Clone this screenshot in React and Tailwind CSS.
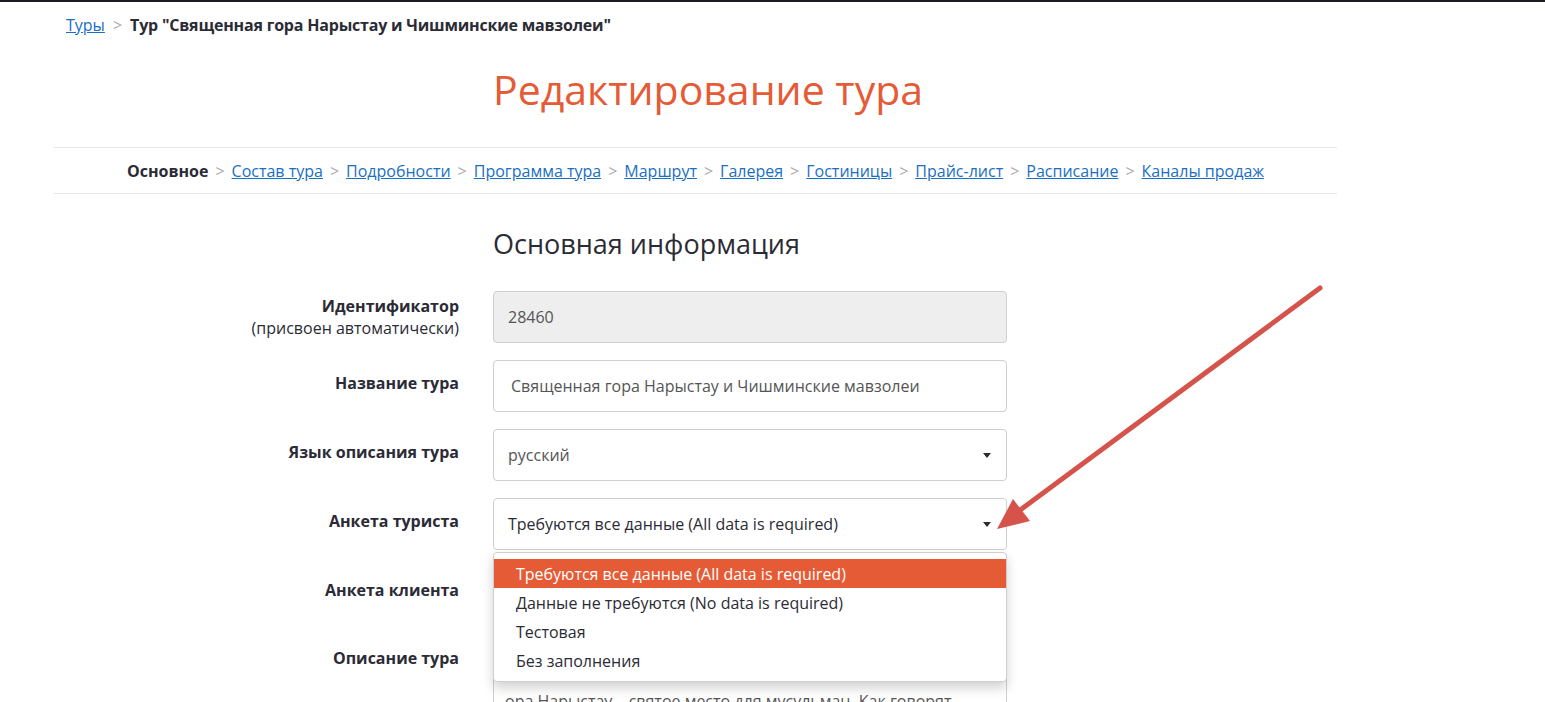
import React from 'react';

const navSteps = [
  'Состав тура',
  'Подробности',
  'Программа тура',
  'Маршрут',
  'Галерея',
  'Гостиницы',
  'Прайс-лист',
  'Расписание',
  'Каналы продаж',
];

const touristOptions = [
  'Требуются все данные (All data is required)',
  'Данные не требуются (No data is required)',
  'Тестовая',
  'Без заполнения',
];

function Caret() {
  return (
    <svg width="8" height="5" viewBox="0 0 8 5" className="shrink-0">
      <path d="M0 0h8L4 5z" fill="#2b2b36" />
    </svg>
  );
}

function Row({ label, sub, children }) {
  return (
    <div className="flex items-center">
      <div className={sub ? 'w-[405px] text-right leading-[22px]' : 'w-[405px] text-right leading-[22px] mb-[6px]'}>
        <div className="font-bold text-[#2b2b36]">{label}</div>
        {sub && <div className="text-[#2b2b36]">{sub}</div>}
      </div>
      <div className="ml-[34px] w-[514px]">{children}</div>
    </div>
  );
}

export default function App() {
  return (
    <div
      className="relative h-[702px] overflow-hidden bg-white border-t-2 border-[#1c1c24] text-[16px] text-[#2b2b36]"
      style={{ fontFamily: '"Open Sans", "Noto Sans", sans-serif' }}
    >
      <div className="ml-[54px] w-[1283px]">
        {/* top breadcrumbs */}
        <div className="pl-3 pt-[11px] h-[48px] flex items-start gap-2">
          <a href="#" className="text-[#1a6fc4] underline">Туры</a>
          <span className="text-[#aaa]">&gt;</span>
          <span className="font-bold tracking-[-0.2px]">Тур "Священная гора Нарыстау и Чишминские мавзолеи"</span>
        </div>

        <h1 className="ml-[439px] mt-[9px] text-[41px] leading-[60px] text-[#e55b35] font-normal">
          Редактирование тура
        </h1>

        <div className="mt-[28px] border-y border-[#e6e6e6] h-[47px] flex items-center justify-center gap-[7px]">
          <span className="font-bold">Основное</span>
          {navSteps.map((s) => (
            <React.Fragment key={s}>
              <span className="text-[#aaa]">&gt;</span>
              <a href="#" className="text-[#1a6fc4] underline">{s}</a>
            </React.Fragment>
          ))}
        </div>

        <h2 className="ml-[439px] mt-[32px] text-[27px] leading-[36px] font-normal text-[#2b2b36]">
          Основная информация
        </h2>

        <div className="mt-[29px] flex flex-col gap-[17px]">
          <Row label="Идентификатор" sub="(присвоен автоматически)">
            <div className="h-[52px] rounded border border-[#cfcfcf] bg-[#eeeeee] px-[14px] flex items-center text-[#555]">
              28460
            </div>
          </Row>
          <Row label="Название тура">
            <div className="h-[52px] rounded border border-[#cfcfcf] bg-white px-[17px] flex items-center text-[#555]">
              Священная гора Нарыстау и Чишминские мавзолеи
            </div>
          </Row>
          <Row label="Язык описания тура">
            <div className="h-[52px] rounded border border-[#cfcfcf] bg-white pl-[14px] pr-[15px] flex items-center justify-between text-[#555]">
              <span>русский</span>
              <Caret />
            </div>
          </Row>
          <Row label="Анкета туриста">
            <div className="relative">
              <div className="h-[52px] rounded border border-[#cfcfcf] bg-white pl-[14px] pr-[15px] flex items-center justify-between text-[#2b2b36]">
                <span>Требуются все данные (All data is required)</span>
                <Caret />
              </div>
              <ul className="absolute z-10 left-0 right-0 top-[54px] rounded border border-[#cfcfcf] bg-white py-[6px] shadow-[0_6px_12px_rgba(0,0,0,0.18)]">
                {touristOptions.map((o, i) => (
                  <li
                    key={o}
                    className={
                      i === 0
                        ? 'h-[29px] pl-[22px] flex items-center bg-[#e55b35] text-white'
                        : 'h-[29px] pl-[22px] flex items-center text-[#2b2b36]'
                    }
                  >
                    {o}
                  </li>
                ))}
              </ul>
            </div>
          </Row>
          <Row label="Анкета клиента">
            <div className="h-[52px] rounded border border-[#cfcfcf] bg-white pl-[14px] pr-[15px] flex items-center justify-between text-[#555]">
              <span>Требуются все данные (All data is required)</span>
              <Caret />
            </div>
          </Row>
          <div className="flex items-start">
            <div className="w-[405px] text-right font-bold pt-[11px] leading-[22px]">Описание тура</div>
            <div className="ml-[34px] w-[514px] h-[140px] rounded border border-[#cfcfcf] bg-white px-[11px] pt-[52px] text-[#555]">
              ора Нарыстау – святое место для мусульман. Как говорят
            </div>
          </div>
        </div>
      </div>

      {/* annotation arrow */}
      <svg className="absolute left-0 top-0 pointer-events-none" width="1545" height="702">
        <line x1="1320" y1="286" x2="1012" y2="514" stroke="#d5534a" strokeWidth="5" strokeLinecap="round" />
        <path d="M997 527 L1013 497 L1030 519 Z" fill="#d5534a" />
      </svg>
    </div>
  );
}
